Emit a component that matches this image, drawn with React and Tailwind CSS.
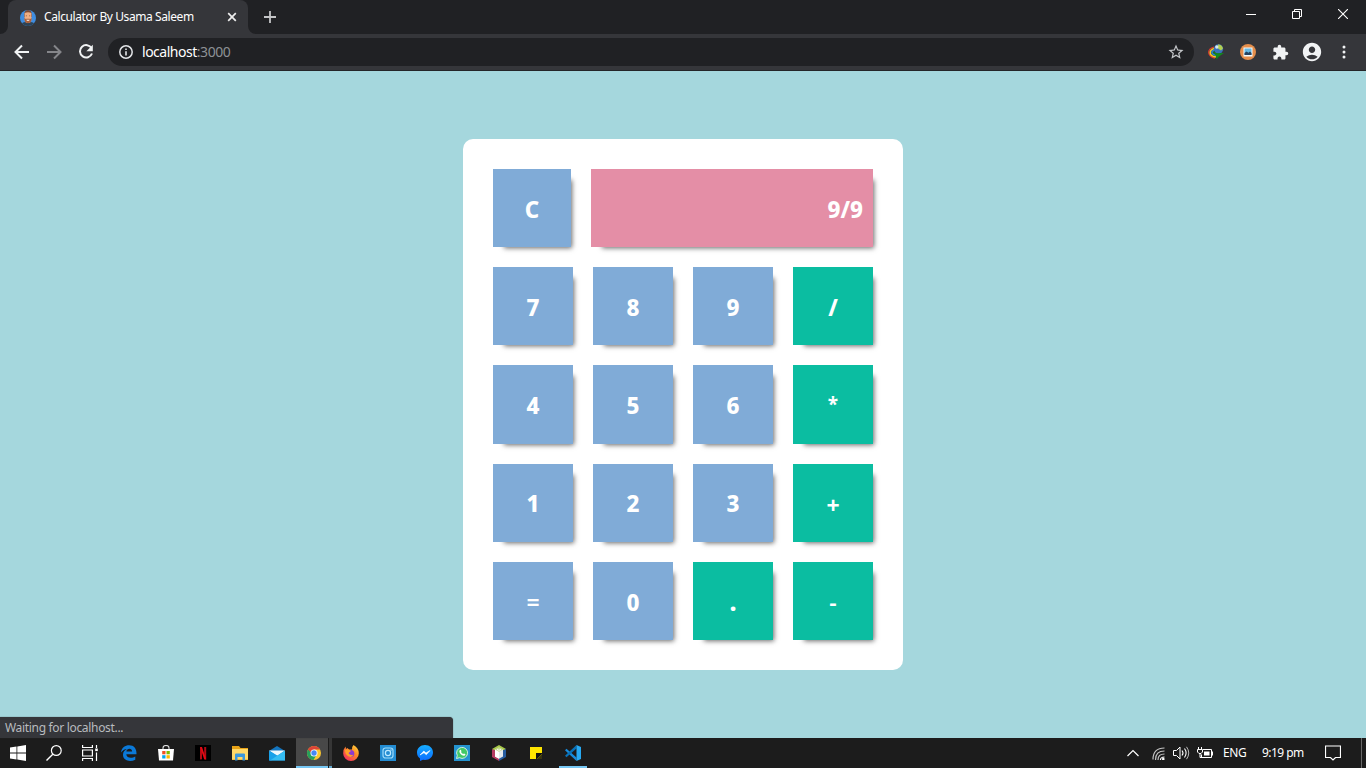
import React from "react";
import { MdStarBorder, MdExtension, MdAccountCircle } from "react-icons/md";

function Svg({ w = 16, h = w, vb, className = "", children }) {
  return (
    <svg width={w} height={h} viewBox={vb || `0 0 ${w} ${h}`} className={`block shrink-0 ${className}`} fill="none">
      {children}
    </svg>
  );
}

function TabStrip() {
  return (
    <div className="flex h-[34px] bg-[#202124]">
      <Svg w={8} className="self-end"><path d="M8 0V8H0A8 8 0 0 0 8 0Z" fill="#35363a" /></Svg>
      <div className="flex h-full w-[240px] items-center rounded-t-[8px] bg-[#35363a] pl-3">
        <Svg w={16} className="mt-px">
          <defs><clipPath id="face"><circle cx="8" cy="8" r="8" /></clipPath></defs>
          <g clipPath="url(#face)">
            <rect width="16" height="16" fill="#3f8de0" />
            <path d="M1 16q0-4 5-4h4q5 0 5 4z" fill="#2d4356" />
            <path d="M4.200 5q0-5 3.800-5t3.800 5v2H4.200z" fill="#7d4a33" />
            <path d="M4.600 3q3.400-1.500 6.800 0v6q0 4-3.400 4T4.600 9z" fill="#f0ae82" />
            <path d="M4.300 8q1.500 1.200 2.200.8h3q.7.400 2.200-.8 0 5.200-3.700 5.200T4.300 8z" fill="#a8603d" />
            <path d="M6.300 9.700h3.400q-.4 1.300-1.700 1.300t-1.700-1.300z" fill="#f5e6dc" />
            <path d="M5.800 5.800h1.200M9 5.800h1.200" stroke="#8a563b" strokeWidth=".7" />
          </g>
        </Svg>
        <span className="ml-2 w-[183px] whitespace-nowrap text-[12px] leading-4 text-white tracking-[-0.42px]">Calculator By Usama Saleem</span>
        <Svg w={10}><path d="M1.200 1.200l7.600 7.600M8.800 1.200L1.200 8.800" stroke="#eee" strokeWidth="1.700" /></Svg>
      </div>
      <Svg w={8} className="self-end"><path d="M0 0V8H8A8 8 0 0 1 0 0Z" fill="#35363a" /></Svg>
      <Svg w={12} className="ml-2 mt-[11px]"><path d="M6 0v12M0 6h12" stroke="#c4c5c7" strokeWidth="1.800" /></Svg>
      <div className="ml-auto flex h-7 items-center">
        <div className="flex w-[46px] justify-center"><Svg w={10}><path d="M0 5.500h10" stroke="#fff" /></Svg></div>
        <div className="flex w-[46px] justify-center"><Svg w={10}><path d="M.5 2.500h7v7h-7zM2.500 2.500v-2h7v7h-2" stroke="#fff" /></Svg></div>
        <div className="flex w-[46px] justify-center"><Svg w={10}><path d="M0 0l10 10M10 0L0 10" stroke="#fff" strokeWidth="1.100" /></Svg></div>
      </div>
    </div>
  );
}

function Toolbar() {
  return (
    <div className="flex h-[37px] items-center border-b border-[#242528] bg-[#35363a] pl-[6px]">
      <div className="flex w-8 justify-center"><Svg w={16}><path d="M15 8H2M8 1.500L1.500 8 8 14.500" stroke="#f1f3f4" strokeWidth="2" /></Svg></div>
      <div className="flex w-8 justify-center"><Svg w={16}><path d="M1 8h13M8 1.500L14.500 8 8 14.500" stroke="#85868a" strokeWidth="2" /></Svg></div>
      <div className="flex w-8 justify-center">
        <Svg w={16}><path d="M13.600 4.200A6.200 6.200 0 1 0 14 9.500" stroke="#f1f3f4" strokeWidth="2" /><path d="M14.800 .8v6.400H8.400z" fill="#f1f3f4" /></Svg>
      </div>
      <div className="ml-[6px] flex h-7 w-[1086px] items-center rounded-full bg-[#202124] pl-[11px] pr-[9px]">
        <Svg w={14}><circle cx="7" cy="7" r="6.200" stroke="#e3e5e8" strokeWidth="1.500" /><path d="M7 6.200v4.300M7 3.400v1.700" stroke="#e3e5e8" strokeWidth="1.600" /></Svg>
        <span className="ml-[9px] whitespace-nowrap text-[14px] leading-5 text-white tracking-[-0.48px]">localhost<span className="text-[#8d9196]">:3000</span></span>
        <MdStarBorder className="ml-auto text-[#c4c7ca]" size={18} />
      </div>
      <div className="ml-[6px] flex items-center">
        <div className="flex w-8 justify-center">
          <Svg w={16}>
            <path d="M6 3Q0 5 .8 9T7 14" stroke="#d63b31" strokeWidth="1.300" />
            <path d="M6 4.500Q2 6 2.200 9T8 13" stroke="#f1cd22" strokeWidth="1.600" />
            <path d="M6 6Q3.500 7.500 4 9t4 2.500" stroke="#298bd0" strokeWidth="1.500" />
            <circle cx="10.500" cy="5" r="4.700" fill="#3872bd" />
            <path d="M10 .5q4-.2 5 4l-2 2-3-2z" fill="#b1cf52" /><circle cx="8.800" cy="3" r="1.700" fill="#d8e9eb" />
            <path d="M4.500 7.500l4.500 1.700L16 9l-5 3.500-2.500 3-.5-3.500z" fill="#128a1c" />
          </Svg>
        </div>
        <div className="flex w-8 justify-center">
          <Svg w={16}><circle cx="8" cy="8" r="8" fill="#e58e4b" /><path d="M3.500 3.500h9v9h-9z" fill="#f4fafc" /><path d="M4.500 4.500h7v6.500h-7z" fill="#64b9e4" /><path d="M4.500 11V9l2-1.500 2 1.300L10 7.500 11.500 9v2z" fill="#254260" /></Svg>
        </div>
        <div className="flex w-8 justify-center"><MdExtension size={17} className="text-[#f1f3f4]" /></div>
        <div className="flex w-8 justify-center"><MdAccountCircle size={22} className="text-[#f1f3f4]" /></div>
        <div className="flex w-8 justify-center"><Svg w={4} h={14}><circle cx="2" cy="2" r="1.500" fill="#f1f3f4" /><circle cx="2" cy="7" r="1.500" fill="#f1f3f4" /><circle cx="2" cy="12" r="1.500" fill="#f1f3f4" /></Svg></div>
      </div>
    </div>
  );
}

const keys = ["7", "8", "9", "/", "4", "5", "6", "*", "1", "2", "3", "+", "=", "0", ".", "-"];
const operators = ["/", "*", "+", ".", "-"];
const glyphs = {
  "*": "text-[19px] font-bold",
  "+": "text-[23px] font-bold pt-[5px]",
  "=": "text-[23px] font-semibold pt-[3px]",
  "-": "text-[23px] font-semibold pt-[2px]",
  ".": "text-[25px] font-extrabold pt-[1px]",
};
const keyBase = "flex items-center text-white shadow-[6px_6px_5px_-5px_rgba(0,0,0,0.6)]";
const keyText = "pt-[3px] text-[22.4px] font-extrabold";

function Calculator() {
  return (
    <div className="flex h-[531px] w-[440px] flex-col gap-5 rounded-[10px] bg-white p-[30px]">
      <div className="flex h-[78.200px] shrink-0 gap-5">
        <button className={`${keyBase} ${keyText} w-[78px] justify-center bg-[#80abd7]`}>C</button>
        <div className={`${keyBase} ${keyText} flex-1 justify-end bg-[#e48ea6] pr-[10px]`}>9/9</div>
      </div>
      <div className="grid flex-1 grid-cols-4 grid-rows-4 gap-5">
        {keys.map((k) => (
          <button key={k} className={`${keyBase} h-full min-h-0 justify-center ${glyphs[k] || keyText} ${operators.includes(k) ? "bg-[#0bbda1]" : "bg-[#80abd7]"}`}>{k}</button>
        ))}
      </div>
    </div>
  );
}

const apps = {
  edge: (
    <Svg w={16}><path d="M0 7.500C.7 2.500 4 .2 8.200 .2c5 0 7.500 3.700 7.300 9H5.300c.2 4 5.700 4.300 9 2.200v3.300C8.500 17.500 2 15.300 2 9.700 2 7 3.700 5 5.900 4 3.500 4.200 1.300 5.500 0 7.500zM5.400 6.500h5.700c0-4-5.500-3.500-5.700 0z" fill="#0b79d8" /></Svg>
  ),
  store: (
    <Svg w={16}><path d="M5 5V3q0-2.500 3-2.500T11 3v2" stroke="#ddd" strokeWidth="1.100" /><path d="M0 4h16l-1 11.500H1z" fill="#fff" /><path d="M4.200 6h3.300v3.300H4.200z" fill="#f25022" /><path d="M8.500 6h3.300v3.300H8.500z" fill="#7fba00" /><path d="M4.200 10.200h3.300v3.300H4.200z" fill="#00a4ef" /><path d="M8.500 10.200h3.300v3.300H8.500z" fill="#ffb900" /></Svg>
  ),
  netflix: (
    <Svg w={16}><path d="M0 0h16v16H0z" fill="#000" /><path d="M5 2h2v12.200L5 14.500zM9.200 2h2v12.500l-2-.3z" fill="#b50b14" /><path d="M5 2h2l4.200 12.500-2-.3z" fill="#e50914" /></Svg>
  ),
  explorer: (
    <Svg w={16}><path d="M0 1h7l1.500 2H16v12H0z" fill="#e8a317" /><path d="M0 4h16v10.500H0z" fill="#ffd868" /><path d="M3 15.500V9.500q0-1 1-1h8q1 0 1 1v6h-2.500V12h-5v3.500z" fill="#3a97dc" /></Svg>
  ),
  mail: (
    <Svg w={16}><path d="M0 6L8 1l8 5v9.500H0z" fill="#1475be" /><path d="M0 5.500h16L8 11z" fill="#eef8fd" /><path d="M0 5.500l9 5.500-7 4.500H0z" fill="#1aa1e9" /><path d="M16 5.500v10H1z" fill="#35bdf3" /></Svg>
  ),
  chrome: (
    <Svg w={14} vb="0 0 16 16"><circle cx="8" cy="8" r="8" fill="#fbc62f" /><path d="M1.100 4A8 8 0 0 0 7.500 16L11 9.800 8 8z" fill="#25a05b" /><path d="M1.100 4A8 8 0 0 1 14.900 4H8L5 8z" fill="#dc4437" /><circle cx="8" cy="8" r="4" fill="#fff" /><circle cx="8" cy="8" r="3.100" fill="#4687f4" /></Svg>
  ),
  firefox: (
    <Svg w={16}>
      <defs><linearGradient id="fx" x1="1" y1="0" x2="0.200" y2="1"><stop stopColor="#ffe040" /><stop offset=".45" stopColor="#ff8a24" /><stop offset="1" stopColor="#f52b64" /></linearGradient></defs>
      <path d="M10.500 0q5.500 3 5.300 8.500A7.800 7.500 0 0 1 .2 8.500Q.2 4 2.500 1.500L3 4l1.500-1L6 4.500h3Q8.500 2 10.500 0z" fill="url(#fx)" />
      <circle cx="7.800" cy="8.600" r="3.500" fill="#8c3ad0" /><path d="M2 5q3-2 6 1L5.500 8q1.500 3 5 1.500Q9 13 5.500 11.500 2 9.500 2 5z" fill="#ffa128" />
    </Svg>
  ),
  instagram: (
    <Svg w={16}><path d="M0 0h16v16H0z" fill="#238cd2" /><rect x="3" y="3" width="10" height="10" rx="2.500" stroke="#9edbfa" strokeWidth="1.200" /><circle cx="8" cy="8" r="2.600" stroke="#bde9ff" strokeWidth="1.200" /><circle cx="11" cy="5" r=".7" fill="#c9eeff" /></Svg>
  ),
  messenger: (
    <Svg w={16}>
      <defs><linearGradient id="ms" x1="0" y1="0" x2="0" y2="1"><stop stopColor="#16adff" /><stop offset="1" stopColor="#0a6bff" /></linearGradient></defs>
      <path d="M8 0c4.700 0 8 3.300 8 7.500S12.700 15 8 15l-2-.2L3 16v-2.500C1 12 0 10 0 7.500 0 3.300 3.300 0 8 0z" fill="url(#ms)" /><path d="M3 10l3.800-4L9 8l4-2.500L9.300 9.700 7 7.700z" fill="#fff" stroke="#fff" strokeWidth=".6" />
    </Svg>
  ),
  whatsapp: (
    <Svg w={16}><path d="M0 0h16v16H0z" fill="#2493cf" /><path d="M2.500 13.500l.8-3A5.500 5.500 0 1 1 5.500 12.700z" fill="#43c967" stroke="#def5e7" strokeWidth=".9" /><path d="M5.800 5l1-.2.7 1.500-.5.800q.8 1.500 2.200 2l.8-.7 1.500.8q-.3 1.500-1.700 1.500Q6 10 5.300 6.500z" fill="#fff" /></Svg>
  ),
  netbeans: (
    <Svg w={14} h={16}><path d="M7 0l7 4-7 4-7-4z" fill="#a8c94b" /><path d="M0 4l7 3.500V16l-7-4z" fill="#b63c63" /><path d="M14 4L7 7.500V16l7-4z" fill="#275c9f" /><path d="M7 2.500l4 2v7l-4 2.300-4-2.300v-7z" fill="#e7ebed" /><path d="M3 4.500l4 2.300v7l-4-2.300z" fill="#fff" /><path d="M7 2.500l4 2-4 2.300-4-2.300z" fill="#c4d98a" /><path d="M5 4.500q2 1.500 4 0" stroke="#fff" /></Svg>
  ),
  notes: (
    <Svg w={12}><path d="M0 0h12v12H0z" fill="#fee500" /><path d="M6 6h6v1l-5 5H6z" fill="#111" /><path d="M12 7v5H7z" fill="#39350f" /></Svg>
  ),
  code: (
    <Svg w={16}><path d="M0 5.200l1.500-1.400 10 8.700V16z" fill="#178bdc" /><path d="M0 10.800l1.500 1.400 10-8.700V0z" fill="#0871b8" /><path d="M11.500 0L16 2v12l-4.500 2z" fill="#27a9f2" /></Svg>
  ),
};

function Taskbar() {
  return (
    <div className="flex h-[30px] items-center bg-[#1c1c1c] text-[12px] text-white">
      <div className="flex w-9 justify-center"><Svg w={16}><path d="M0 2.400L6.500 1.500v6H0zM7.300 1.400L16 0v7.500H7.300zM0 8.400h6.500v6L0 13.600zM7.300 8.400H16V16l-8.700-1.400z" fill="#fff" /></Svg></div>
      <div className="flex w-9 justify-center"><Svg w={16}><circle cx="10.300" cy="5.500" r="4.900" stroke="#fff" strokeWidth="1.200" /><path d="M6.800 9.200L.5 15.500" stroke="#fff" strokeWidth="1.400" /></Svg></div>
      <div className="flex w-9 justify-center"><Svg w={16}><path d="M.6 0v2.500h9.800V0M.6 16v-2.500h9.800V16M.6 5h9.800v6H.6zM14.500 0v3M14.500 7.500V16" stroke="#fff" strokeWidth="1.200" /><path d="M13.200 3.500h2.600v2.600h-2.600z" fill="#fff" /></Svg></div>
      <div className="ml-[2px] flex h-full">
        {Object.entries(apps).map(([name, icon]) => {
          if (name === "chrome") return (
            <div key={name} className="flex h-full w-[37px] pl-px">
              <div className="flex h-full w-8 items-center justify-center border-b-2 border-[#76c7f4] bg-[#484848] pl-1 pt-[2px]">{icon}</div>
              <div className="ml-px h-full w-[3px] border-b-2 border-[#65a9ce] bg-[#363636]" />
            </div>
          );
          if (name === "code") return (
            <div key={name} className="flex h-full w-[37px] justify-center">
              <div className="flex h-full w-7 items-center justify-center border-b-2 border-[#76c7f4] pt-[2px]">{icon}</div>
            </div>
          );
          return <div key={name} className="flex h-full w-[37px] items-center justify-center">{icon}</div>;
        })}
      </div>
      <div className="ml-auto flex h-full items-center">
        <Svg w={12} h={8} className="mr-[13px]"><path d="M.5 7L6 1.500 11.500 7" stroke="#fff" strokeWidth="1.200" /></Svg>
        <Svg w={13} className="mr-[8px]">
          <path d="M1 12.500Q1 1 12.500 1M3.500 13Q3.500 4 12.500 4M6 13Q6 7 12.500 7" stroke="#c2c2c2" strokeWidth="1.200" /><path d="M8.500 13q0-3 4-3" stroke="#fff" strokeWidth="1.200" /><circle cx="11.300" cy="12" r="1.300" fill="#fff" />
        </Svg>
        <Svg w={17} className="mr-[7px]"><path d="M.5 5.500h3L7 2v12l-3.500-3.500h-3z" stroke="#fff" /><path d="M9 5.500q2 2.500 0 5M11.500 3.500q3.200 4.500 0 9" stroke="#fff" strokeWidth="1.100" /><path d="M13.500 1.800q4.500 6.200 0 12.400" stroke="#bbb" /></Svg>
        <Svg w={16} className="mr-[10px]"><path d="M6 4.500h8.500v8h-10V9.500" stroke="#fff" /><path d="M15.500 6.500v4M1.500 2v2.500M4.500 2v2.500M3 8v4.500h2" stroke="#fff" /><path d="M.5 4.500h5V7L4 8.500H2L.5 7z" stroke="#fff" /><path d="M7 6.500h5.500v4H7z" fill="#fff" /></Svg>
        <span className="w-[39px] text-[12px] tracking-[-0.4px]">ENG</span>
        <span className="w-[63px] whitespace-nowrap text-[12px] tracking-[-0.56px]">9:19 pm</span>
        <Svg w={16} className="mr-[20px]"><path d="M.5 1h15v11.500H10.500L8 15l-2.500-2.500H.5z" stroke="#fff" strokeWidth="1.200" /></Svg>
        <div className="mr-1 h-full w-px bg-[#686868]" />
      </div>
    </div>
  );
}

export default function App() {
  return (
    <div className="flex h-[768px] w-[1366px] flex-col overflow-hidden font-['Noto_Sans','Open_Sans',sans-serif]">
      <TabStrip />
      <Toolbar />
      <main className="relative flex flex-1 items-center justify-center bg-[#a5d7dd]">
        <Calculator />
        <div className="absolute bottom-0 left-0 h-[21px] w-[453px] rounded-tr-[4px] bg-[#35363a] pl-[5px] text-[12px] leading-[21px] text-[#b8bbbf] shadow-[0_0_1px_#35363a]">
          <span className="tracking-[-0.32px]">Waiting for localhost...</span>
        </div>
      </main>
      <Taskbar />
    </div>
  );
}
